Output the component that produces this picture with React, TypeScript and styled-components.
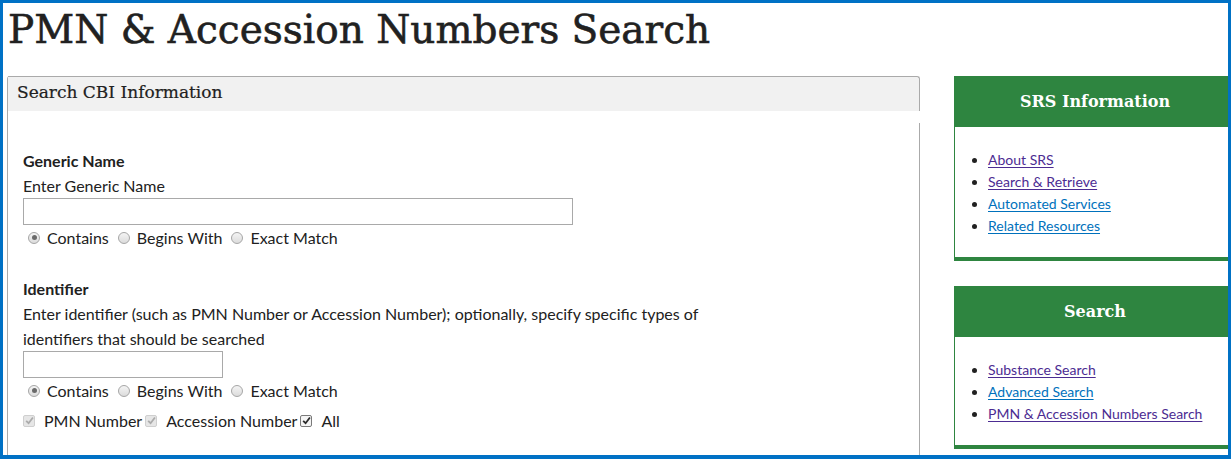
import React from "react";
import styled, { createGlobalStyle } from "styled-components";

const Global = createGlobalStyle`
  html, body { margin: 0; padding: 0; background: #fff; }
  body { font-family: Lato, "Liberation Sans", sans-serif; color: #212121; }
  * { box-sizing: border-box; }
`;

const serif = `"DejaVu Serif", "Liberation Serif", serif`;

const Frame = styled.div`
  width: 1231px;
  height: 459px;
  border: 3px solid #0071c5;
  border-bottom-width: 4px;
  overflow: hidden;
  background: #fff;
`;

const Page = styled.div`
  width: 1240px;
  padding: 0 0 0 4px;
`;

const Title = styled.h1`
  margin: 0;
  padding: 2px 0 0 1px;
  font-family: ${serif};
  font-weight: 400;
  font-size: 39px;
  line-height: 50px;
  color: #212121;
  -webkit-text-stroke: 0.6px #212121;
`;

const Columns = styled.div`
  display: flex;
  align-items: flex-start;
  gap: 34px;
  margin-top: 21px;
`;

const Panel = styled.section`
  width: 913px;
  border-left: 1px solid #aaa;
  border-top-left-radius: 3px;
`;

const PanelHeader = styled.h2`
  margin: 0;
  height: 35px;
  padding: 3px 0 0 9px;
  background: #f1f1f1;
  border-top: 1px solid #aaa;
  border-right: 1px solid #aaa;
  border-top-right-radius: 3px;
  font-family: ${serif};
  font-weight: 400;
  font-size: 17px;
  line-height: 24px;
  color: #212121;
  -webkit-text-stroke: 0.2px #212121;
`;

const PanelBody = styled.div`
  margin-top: 12px;
  border-right: 1px solid #aaa;
  padding: 25px 15px 40px;
  font-size: 16px;
  line-height: 25px;
`;

const Group = styled.div<{ $gap?: number }>`
  margin-top: ${(p) => p.$gap ?? 0}px;
`;

const Label = styled.div`
  font-weight: 700;
`;

const Hint = styled.div<{ $width?: number }>`
  max-width: ${(p) => (p.$width ? `${p.$width}px` : "none")};
`;

const TextInput = styled.input<{ $w: number }>`
  display: block;
  width: ${(p) => p.$w}px;
  height: 27px;
  border: 1px solid #a9a9a9;
  margin: 0;
  padding: 2px 4px;
  font: inherit;
  background: #fff;
`;

const OptionRow = styled.div<{ $top?: number }>`
  display: flex;
  align-items: center;
  height: 25px;
  margin-top: ${(p) => p.$top ?? 0}px;
  white-space: nowrap;
`;

const Option = styled.label<{ $gap?: number }>`
  display: inline-flex;
  align-items: center;
  margin-right: ${(p) => p.$gap ?? 4}px;
`;

const Radio = styled.span<{ $on?: boolean }>`
  width: 12px;
  height: 12px;
  border-radius: 50%;
  margin: 0 7px 0 5px;
  border: 1px solid #a6a6a6;
  background: linear-gradient(#f4f4f4, #dcdcdc);
  position: relative;
  &::after {
    content: "";
    display: ${(p) => (p.$on ? "block" : "none")};
    position: absolute;
    left: 2.5px;
    top: 2.5px;
    width: 5px;
    height: 5px;
    border-radius: 50%;
    background: #6a6a6a;
  }
`;

const Check = styled.span<{ $dim?: boolean }>`
  width: 12px;
  height: 12px;
  border-radius: 2px;
  border: 1px solid ${(p) => (p.$dim ? "#cfcfcf" : "#7a7a7a")};
  background: ${(p) => (p.$dim ? "#e6e6e6" : "#f4f4f4")};
  margin: 0 9px 0 0;
  display: inline-flex;
  align-items: center;
  justify-content: center;
  svg { display: block; }
`;

const Sidebar = styled.aside`
  width: 282px;
  display: flex;
  flex-direction: column;
  gap: 25px;
`;

const Box = styled.div`
  border-left: 1px solid #2e8540;
  border-bottom: 4px solid #2e8540;
`;

const BoxHeader = styled.h3`
  margin: 0 0 0 -1px;
  height: 51px;
  background: #2e8540;
  color: #fff;
  text-align: center;
  font-family: ${serif};
  font-weight: 700;
  font-size: 16px;
  line-height: 52px;
`;

const LinkList = styled.ul`
  margin: 0;
  padding: 22px 0 20px 33px;
  font-size: 14px;
  line-height: 22px;
  li::marker { color: #212121; }
`;

const Link = styled.a<{ $visited?: boolean }>`
  color: ${(p) => (p.$visited ? "#4c2c92" : "#0071bc")};
  text-decoration: underline;
  text-underline-offset: 2px;
`;

const Tick = ({ color }: { color: string }) => (
  <svg width="9" height="9" viewBox="0 0 10 10">
    <path d="M1.3 5.3 L4 8 L8.8 1.6" fill="none" stroke={color} strokeWidth="2" />
  </svg>
);

const MatchOptions = () => (
  <OptionRow>
    <Option>
      <Radio $on />
      Contains
    </Option>
    <Option>
      <Radio />
      Begins With
    </Option>
    <Option>
      <Radio />
      Exact Match
    </Option>
  </OptionRow>
);

const srsLinks = [
  { t: "About SRS", v: true },
  { t: "Search & Retrieve", v: true },
  { t: "Automated Services", v: false },
  { t: "Related Resources", v: false },
];
const searchLinks = [
  { t: "Substance Search", v: true },
  { t: "Advanced Search", v: false },
  { t: "PMN & Accession Numbers Search", v: true },
];

export default function App() {
  return (
    <Frame>
      <Global />
      <Page>
        <Title>PMN &amp; Accession Numbers Search</Title>
        <Columns>
          <Panel>
            <PanelHeader>Search CBI Information</PanelHeader>
            <PanelBody>
              <Group>
                <Label>Generic Name</Label>
                <Hint>Enter Generic Name</Hint>
                <TextInput $w={550} type="text" />
                <MatchOptions />
              </Group>
              <Group $gap={26}>
                <Label>Identifier</Label>
                <Hint $width={690}>
                  Enter identifier (such as PMN Number or Accession Number); optionally, specify specific
                  types of identifiers that should be searched
                </Hint>
                <TextInput $w={200} type="text" />
                <MatchOptions />
                <OptionRow $top={5}>
                  <Option $gap={3}>
                    <Check $dim>
                      <Tick color="#ababab" />
                    </Check>
                    PMN Number
                  </Option>
                  <Option $gap={3}>
                    <Check $dim>
                      <Tick color="#ababab" />
                    </Check>
                    Accession Number
                  </Option>
                  <Option $gap={0}>
                    <Check>
                      <Tick color="#2a2a2a" />
                    </Check>
                    All
                  </Option>
                </OptionRow>
              </Group>
            </PanelBody>
          </Panel>
          <Sidebar>
            <Box>
              <BoxHeader>SRS Information</BoxHeader>
              <LinkList>
                {srsLinks.map((l) => (
                  <li key={l.t}>
                    <Link href="#" $visited={l.v}>
                      {l.t}
                    </Link>
                  </li>
                ))}
              </LinkList>
            </Box>
            <Box>
              <BoxHeader>Search</BoxHeader>
              <LinkList>
                {searchLinks.map((l) => (
                  <li key={l.t}>
                    <Link href="#" $visited={l.v}>
                      {l.t}
                    </Link>
                  </li>
                ))}
              </LinkList>
            </Box>
          </Sidebar>
        </Columns>
      </Page>
    </Frame>
  );
}
